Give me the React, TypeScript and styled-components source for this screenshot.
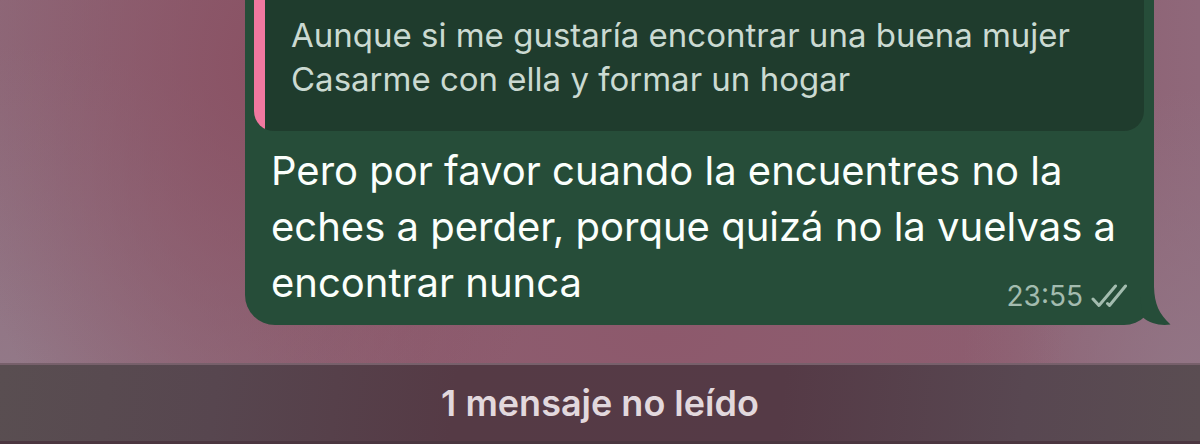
import React from "react";
import styled, { createGlobalStyle } from "styled-components";

const GlobalStyle = createGlobalStyle`
  * { box-sizing: border-box; }
  body {
    margin: 0;
    font-family: Inter, "Liberation Sans", sans-serif;
  }
`;

const Chat = styled.main`
  display: flex;
  flex-direction: column;
  min-height: 100vh;
  overflow: hidden;
  background:
    radial-gradient(ellipse 26% 110% at 22% 14%, #8a5264 0%, #8a526400 100%),
    radial-gradient(ellipse 34% 40% at 55% 76%, #8d596c 0%, #8d596c00 100%),
    radial-gradient(ellipse 36% 80% at 0% 90%, #937a89 0%, #937a8900 100%),
    radial-gradient(ellipse 20% 70% at 100% 90%, #927686 0%, #92768600 100%),
    linear-gradient(90deg, #8e6a7a 0%, #8d6072 40%, #8d5e70 85%, #8f687a 100%);
`;

const Bubble = styled.article`
  position: relative;
  margin: 0 46px 0 245px;
  padding: 0 10px 14px 9px;
  border-radius: 0 0 30px 30px;
  background: #264d39;
`;

const Quote = styled.blockquote`
  margin: 0;
  padding: 13px 26px 30px 37px;
  border-radius: 0 0 20px 20px;
  background: linear-gradient(90deg, #f0789f 11px, #1f3c2d 11px);
  color: #cbdad2;
  font-size: 33px;
  line-height: 44px;
`;

const QuoteLine = styled.p`
  margin: 0;
`;

const Message = styled.p`
  margin: 0;
  padding: 12px 17px 0;
  color: #fbfffc;
  font-size: 40px;
  line-height: 56px;
`;

const Meta = styled.span`
  float: right;
  display: flex;
  align-items: center;
  gap: 8px;
  margin-top: 24px;
  margin-bottom: -2px;
  color: #a3bcaf;
  font-size: 28px;
  line-height: 34px;
`;

const Tail = styled.svg`
  position: absolute;
  right: -18px;
  bottom: 0;
`;

const UnreadBar = styled.div`
  margin-top: 38px;
  padding: 18px 0;
  border-top: 2px solid #77606b;
  border-bottom: 3px solid #4b3640;
  background: linear-gradient(96deg, #594e51 0%, #57464f 18%, #553a45 38%, #553a46 65%, #584751 85%, #5a4d52 100%);
  color: #e2d8dd;
  font-size: 36px;
  font-weight: 600;
  line-height: 40px;
  text-align: center;
`;

export default function App() {
  return (
    <>
      <GlobalStyle />
      <Chat>
        <Bubble>
          <Quote>
            <QuoteLine>Aunque si me gustaría encontrar una buena mujer</QuoteLine>
            <QuoteLine>Casarme con ella y formar un hogar</QuoteLine>
          </Quote>
          <Message>
            Pero por favor cuando la encuentres no la eches a perder, porque quizá no la vuelvas a
            encontrar nunca
            <Meta>
              <time dateTime="23:55">23:55</time>
              <svg width="36" height="24" viewBox="0 0 36 24" fill="none" stroke="currentColor" strokeWidth="3" strokeLinecap="round" strokeLinejoin="round" role="img" aria-label="Leído">
                <path d="M2 15L8 21.500L24.500 2" />
                <path d="M16.500 19.500L18.500 21.500L34.500 2" />
              </svg>
            </Meta>
          </Message>
          <Tail width="48" height="48" viewBox="0 0 48 48" aria-hidden="true">
            <path d="M30 0V10C30.500 27 35 37 46.500 47.500C36 49 26 46.500 19 40.500L16 20V0Z" fill="#264d39" />
          </Tail>
        </Bubble>
        <UnreadBar role="status">1 mensaje no leído</UnreadBar>
      </Chat>
    </>
  );
}
